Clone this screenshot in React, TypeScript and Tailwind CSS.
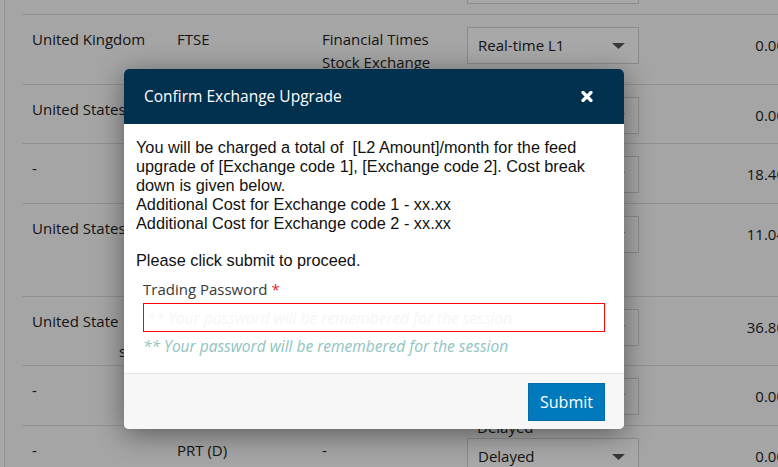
import React from 'react';

type Row = {
    h: string;
    c1: React.ReactNode;
    c2?: string;
    c3?: React.ReactNode;
    feed: string;
    num: string;
    after?: string;
};

const rows: Row[] = [
    { h: 'h-[60px] -mt-[45px]', c1: '-', feed: 'Delayed', num: '0.00' },
    { h: 'h-[70px]', c1: 'United Kingdom', c2: 'FTSE', c3: <>Financial Times<br />Stock Exchange</>, feed: 'Real-time L1', num: '0.00' },
    { h: 'h-[59px]', c1: 'United States', c2: 'NYSE', c3: 'New York Stock Exchange', feed: 'Real-time L1', num: '0.00' },
    { h: 'h-[60px]', c1: '-', c2: 'NSDQ', c3: '-', feed: 'Real-time L1', num: '18.40' },
    { h: 'h-[93px]', c1: 'United States', c2: 'AMEX', c3: <>American<br />Stock<br />Exchange</>, feed: 'Real-time L1', num: '11.04' },
    { h: 'h-[69px]', c1: <>United State<div className="pl-[87px] mt-[7px]">s</div></>, c2: 'OPRA', c3: 'Options', feed: 'Real-time L1', num: '36.80' },
    { h: 'h-[60px]', c1: '-', c2: 'OTC', c3: '-', feed: 'Real-time L1', num: '0.00', after: 'Delayed' },
    { h: 'h-[60px]', c1: '-', c2: 'PRT (D)', c3: '-', feed: 'Delayed', num: '0.00' },
];

function FeedSelect({ value }: { value: string }) {
    return (
        <div className="h-[37px] w-[172px] border border-[#d4d4d4] bg-white flex items-center justify-between pl-[10px] pr-[13px]">
            <span>{value}</span>
            <svg width="13" height="6" viewBox="0 0 13 6">
                <path d="M0 0h13L6.5 6z" fill="#555" />
            </svg>
        </div>
    );
}

function CloseIcon() {
    return (
        <svg width="12" height="11" viewBox="0 0 12 11">
            <path d="M2 1.5l8 8M10 1.5l-8 8" stroke="#fff" strokeWidth="3.2" strokeLinecap="round" />
        </svg>
    );
}

export default function App() {
    return (
        <div className="relative w-[778px] h-[467px] overflow-hidden bg-white font-['Open_Sans',sans-serif] text-[15px] text-[#222]">
            <div className="ml-[4px] h-full border-l border-[#e4e4e4] bg-[#fbfbfb] pl-[17px] overflow-hidden">
                <div className="w-[773px]">
                    {rows.map((r, i) => (
                        <div key={i} className={`${r.h} flex border-b-[1.5px] border-[#dcdcdc] leading-[23px]`}>
                            <div className="w-[145px] shrink-0 px-[10px] pt-[13px]">{r.c1}</div>
                            <div className="w-[145px] shrink-0 px-[10px] pt-[13px]">{r.c2}</div>
                            <div className="w-[145px] shrink-0 px-[10px] pt-[13px]">{r.c3}</div>
                            <div className="w-[193px] shrink-0 px-[10px] pt-[12px]">
                                <FeedSelect value={r.feed} />
                                {r.after && <div className="mt-[1px] pl-[10px]">{r.after}</div>}
                            </div>
                            <div className="w-[145px] shrink-0 px-[10px] pt-[19px] text-right">{r.num}</div>
                        </div>
                    ))}
                </div>
            </div>

            <div className="absolute inset-0 bg-black/[0.34]" />

            <div className="absolute left-[124px] top-[69px] w-[500px] rounded-[5px] overflow-hidden bg-white shadow-[0_5px_28px_rgba(0,0,0,0.45)]">
                <div className="h-[55px] bg-[#02314f] flex items-center justify-between pl-[20px] pr-[31px]">
                    <h4 className="text-white text-[15.5px]">Confirm Exchange Upgrade</h4>
                    <button className="flex items-center">
                        <CloseIcon />
                    </button>
                </div>
                <div className="px-[12px] pt-[14px] pb-[16px]">
                    <p className="font-['Liberation_Sans',Arial,sans-serif] text-[16.3px] leading-[18.9px] text-[#111]">
                        You will be charged a total of &nbsp;[L2 Amount]/month for the feed upgrade of [Exchange code 1], [Exchange code 2]. Cost break down is given below.
                        <br />Additional Cost for Exchange code 1 - xx.xx
                        <br />Additional Cost for Exchange code 2 - xx.xx
                        <br />
                        <br />Please click submit to proceed.
                    </p>
                    <div className="px-[7px] mt-[8px]">
                        <label className="block leading-[22px] font-medium text-[#3a3a3a]">
                            Trading Password <span className="text-[#e8262b]">*</span>
                        </label>
                        <input
                            type="password"
                            placeholder="** Your password will be remembered for the session"
                            className="mt-[3px] block w-full h-[29px] border border-[#ff0000] px-[3px] outline-none italic text-[15.5px] placeholder:text-[#f6f6f6]"
                        />
                        <p className="mt-[3px] leading-[22px] italic text-[15.5px] text-[#8fc4c0]">** Your password will be remembered for the session</p>
                    </div>
                </div>
                <div className="h-[56px] border-t border-[#e5e5e5] bg-[#f7f7f7] flex items-center justify-end pr-[19px]">
                    <button className="h-[38px] w-[77px] bg-[#0079bd] border border-[#006ca9] text-white text-[16px]">Submit</button>
                </div>
            </div>
        </div>
    );
}
